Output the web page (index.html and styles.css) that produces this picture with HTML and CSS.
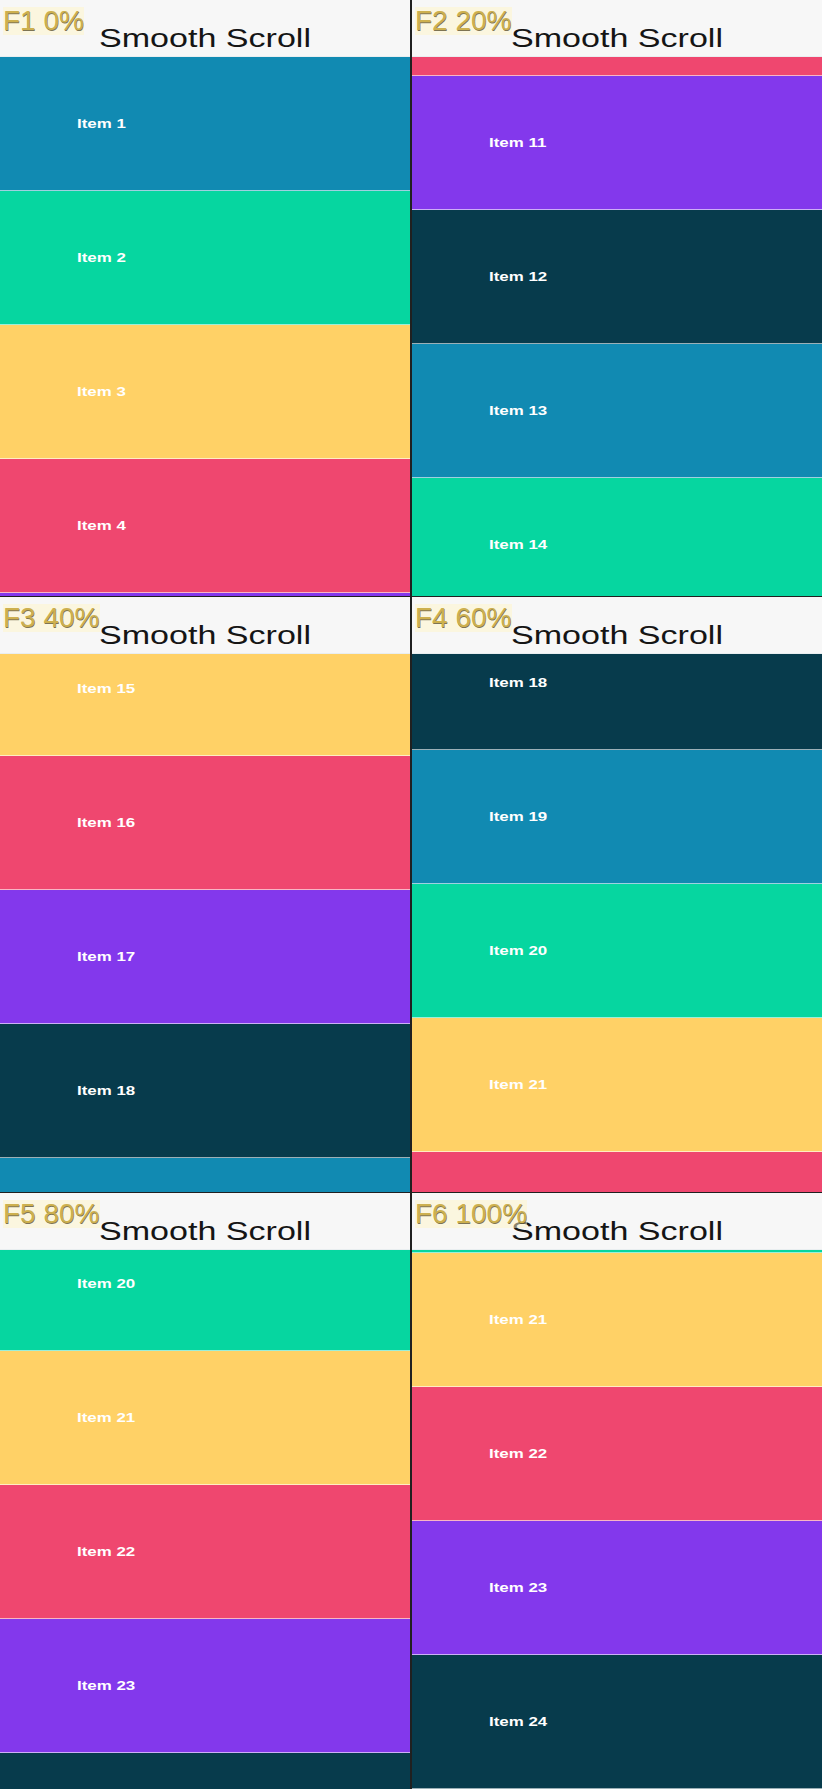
FILE: index.html
```html
<!DOCTYPE html>
<html lang="en">
<head>
    <meta charset="UTF-8">
    <meta name="viewport" content="width=device-width, initial-scale=1.0">
    <title>Smooth Scroll - frames</title>
    <link rel="stylesheet" href="styles.css">
</head>
<body>

    <main class="sheet" id="sheet"></main>

    <script>
        document.addEventListener('DOMContentLoaded', () => {
            const sheet = document.getElementById('sheet');

            // --- Six captured frames of the same list, each with its scroll offset ---
            const frames = [
                { tag: 'F1 0%', scroll: 0 },
                { tag: 'F2 20%', scroll: 1321 },
                { tag: 'F3 40%', scroll: 1908 },
                { tag: 'F4 60%', scroll: 2316 },
                { tag: 'F5 80%', scroll: 2579 },
                { tag: 'F6 100%', scroll: 2679 }
            ];

            const colors = ['blue', 'green', 'yellow', 'pink', 'purple', 'navy'];
            const ITEM_COUNT = 24;

            const buildList = () => {
                const list = document.createElement('ul');
                list.className = 'list';
                for (let i = 1; i <= ITEM_COUNT; i++) {
                    const item = document.createElement('li');
                    item.className = `item ${colors[(i - 1) % colors.length]}`;
                    item.innerHTML = `<span class="item-label">Item ${i}</span>`;
                    list.appendChild(item);
                }
                return list;
            };

            const viewports = [];

            frames.forEach(frame => {
                const section = document.createElement('section');
                section.className = 'frame';
                section.innerHTML = `
                    <span class="tag">${frame.tag}</span>
                    <header class="bar"><h1>Smooth Scroll</h1></header>
                `;
                const viewport = document.createElement('div');
                viewport.className = 'viewport';
                viewport.appendChild(buildList());
                section.appendChild(viewport);
                sheet.appendChild(section);
                viewports.push([viewport, frame.scroll]);
            });

            // Apply the scroll offsets once everything is laid out
            viewports.forEach(([viewport, offset]) => {
                viewport.scrollTop = offset;
            });
        });
    </script>

</body>
</html>
```

FILE: styles.css
```css
/* --- Basic Setup --- */
:root {
    --bar-bg: #f7f7f7;
    --title-color: #151515;
    --tag-color: #cdb04f;
    --blue: #118ab2;
    --green: #06d6a0;
    --yellow: #ffd166;
    --pink: #ef476f;
    --purple: #8338ec;
    --navy: #073b4c;
}

body {
    margin: 0;
    background-color: #ffffff;
    font-family: "Liberation Sans", Arial, sans-serif;
}

/* --- Frame grid (2 columns x 3 rows) --- */
.sheet {
    display: grid;
    grid-template-columns: 410px 410px;
    grid-template-rows: repeat(3, 1fr);
    column-gap: 2px;
    row-gap: 1px;
    width: 822px;
    height: 1789px;
    background-color: #202020;
}

.frame {
    position: relative;
    display: flex;
    flex-direction: column;
    min-height: 0;
    overflow: hidden;
    background-color: var(--bar-bg);
}

/* Frame label sits over the app bar */
.tag {
    position: absolute;
    top: 7px;
    left: 3px;
    z-index: 2;
    font-size: 28px;
    line-height: 28px;
    color: var(--tag-color);
    background-color: rgba(255, 246, 200, 0.5);
    text-shadow: 0.5px 0.5px 0.5px rgba(70, 58, 20, 0.7);
}

/* --- App bar --- */
.bar {
    flex: none;
    height: 57px;
    box-sizing: border-box;
    padding-top: 23px;
    background-color: var(--bar-bg);
    border-bottom: 1px solid #e9eef0;
}

.bar h1 {
    margin: 0;
    font-size: 26px;
    font-weight: 400;
    line-height: 30px;
    color: var(--title-color);
    text-align: center;
    transform: scaleX(1.31);
}

/* --- Scrolling list --- */
.viewport {
    flex: 1;
    min-height: 0;
    overflow: hidden;
}

.list {
    list-style: none;
    margin: 0;
    padding: 0;
}

.item {
    display: flex;
    align-items: center;
    height: 134px;
    box-sizing: border-box;
    padding-left: 77px;
    border-bottom: 1px solid rgba(255, 255, 255, 0.6);
}

.item-label {
    font-size: 13px;
    font-weight: 700;
    color: #ffffff;
    transform: scaleX(1.3);
    transform-origin: left center;
}

.blue { background-color: var(--blue); }
.green { background-color: var(--green); }
.yellow { background-color: var(--yellow); }
.pink { background-color: var(--pink); }
.purple { background-color: var(--purple); }
.navy { background-color: var(--navy); }
```
